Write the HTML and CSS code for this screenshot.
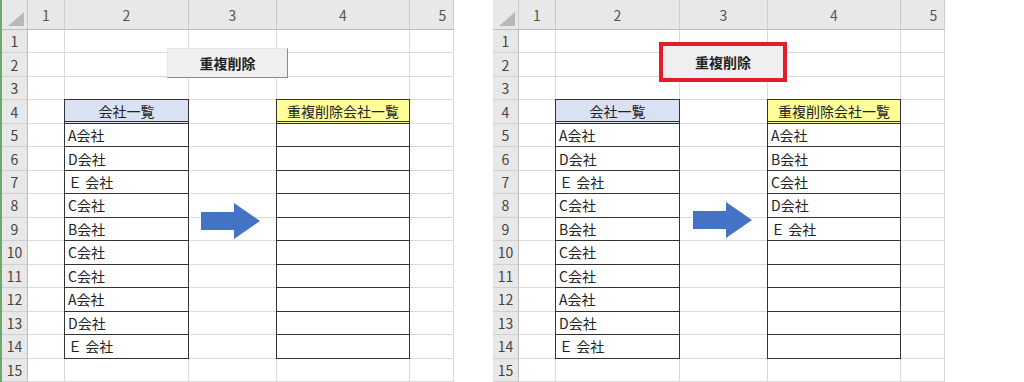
FILE: index.html
```html
<!DOCTYPE html>
<html lang="ja">
<head>
    <meta charset="UTF-8">
    <title>重複削除</title>
    <link rel="stylesheet" href="styles.css">
</head>
<body>
    <div class="page">
        <div class="edge"></div>

        <div class="sheet sheet-before">
            <div class="grid" data-result=""></div>
            <div class="macro">重複削除</div>
            <svg class="arrow" viewBox="0 0 60 36"><polygon points="0,9 33,9 33,0 59,18 33,36 33,27 0,27"/></svg>
        </div>

        <div class="sheet sheet-after">
            <div class="grid" data-result="A会社,B会社,C会社,D会社,Ｅ 会社"></div>
            <div class="macro macro-hit"><span>重複削除</span></div>
            <svg class="arrow" viewBox="0 0 60 36"><polygon points="0,9 33,9 33,0 59,18 33,36 33,27 0,27"/></svg>
        </div>
    </div>

    <script src="script.js"></script>
</body>
</html>
```

FILE: styles.css
```css
body {
    margin: 0;
    background: #fff;
    font-family: "Noto Sans CJK JP", "Liberation Sans", sans-serif;
    font-size: 14px;
    color: #222;
}
.page {
    display: flex;
    width: 1024px;
    height: 382px;
    overflow: hidden;
}
.edge {
    width: 2px;
    background: #6fa86f;
}
.sheet {
    position: relative;
    width: 452px;
    height: 382px;
}
.sheet-after {
    margin-left: 39px;
}
.grid {
    display: grid;
    grid-template-columns: 26px 37px 124px 88px 133px 44px;
    grid-template-rows: 30px repeat(15, 1fr);
    height: 382px;
}
.grid > div {
    display: flex;
    align-items: center;
    white-space: nowrap;
    box-sizing: border-box;
    border-right: 1px solid #dadada;
    border-bottom: 1px solid #dadada;
}
.grid > .hd {
    justify-content: center;
    background: #e8e8e8;
    color: #555;
    border-right-color: #cdcdcd;
    border-bottom-color: #bcbcbc;
}
.grid > .hd.last {
    padding-left: 22px;
}
.grid > .corner {
    position: relative;
}
.corner::after {
    content: "";
    position: absolute;
    right: 3px;
    bottom: 3px;
    border-style: solid;
    border-width: 0 0 14px 16px;
    border-color: transparent transparent #b8b8b8 transparent;
}
.grid > .rh {
    justify-content: center;
    background: #e8e8e8;
    color: #444;
    border-right-color: #bcbcbc;
    border-bottom-color: #d0d0d0;
}
.grid > .t {
    position: relative;
    margin: -1px 0 0 -1px;
    padding-left: 3px;
    border: 1px solid #333;
    background: #fff;
}
.grid > .th {
    justify-content: center;
    padding-left: 0;
    border-bottom: 3px double #333;
}
.th-blue {
    background: #d9e1f2 !important;
}
.th-yellow {
    background: #ffff99 !important;
}
.macro {
    position: absolute;
    left: 165px;
    top: 48px;
    width: 121px;
    height: 30px;
    box-sizing: border-box;
    display: flex;
    align-items: center;
    justify-content: center;
    background: #f0f0f0;
    border: 1px solid;
    border-color: #e4e4e4 #8c8c8c #8c8c8c #e4e4e4;
    font-weight: bold;
    z-index: 2;
}
.macro-hit {
    left: 166px;
    top: 42px;
    width: 128px;
    height: 40px;
    border: 4px solid #e31d2a;
    background: #efefef;
}
.arrow {
    position: absolute;
    left: 199px;
    top: 203px;
    width: 60px;
    height: 36px;
    fill: #4472c4;
    z-index: 2;
}
.sheet-after .arrow {
    left: 200px;
    top: 202px;
}
```

FILE: script.js
```javascript
const companies = ["A会社", "D会社", "Ｅ 会社", "C会社", "B会社", "C会社", "C会社", "A会社", "D会社", "Ｅ 会社"];

function cell(grid, cls, text) {
    const div = document.createElement("div");
    div.className = cls;
    div.textContent = text || "";
    grid.appendChild(div);
}

document.querySelectorAll(".grid").forEach((grid) => {
    const result = grid.dataset.result ? grid.dataset.result.split(",") : [];

    // column headers
    cell(grid, "hd corner");
    for (let c = 1; c <= 5; c++) {
        cell(grid, c === 5 ? "hd last" : "hd", c);
    }

    for (let r = 1; r <= 15; r++) {
        cell(grid, "rh", r);
        for (let c = 1; c <= 5; c++) {
            if (r === 4 && c === 2) {
                cell(grid, "t th th-blue", "会社一覧");
            } else if (r === 4 && c === 4) {
                cell(grid, "t th th-yellow", "重複削除会社一覧");
            } else if (r >= 5 && r <= 14 && c === 2) {
                cell(grid, "t", companies[r - 5]);
            } else if (r >= 5 && r <= 14 && c === 4) {
                cell(grid, "t", result[r - 5]);
            } else {
                cell(grid, "c");
            }
        }
    }
});
```
